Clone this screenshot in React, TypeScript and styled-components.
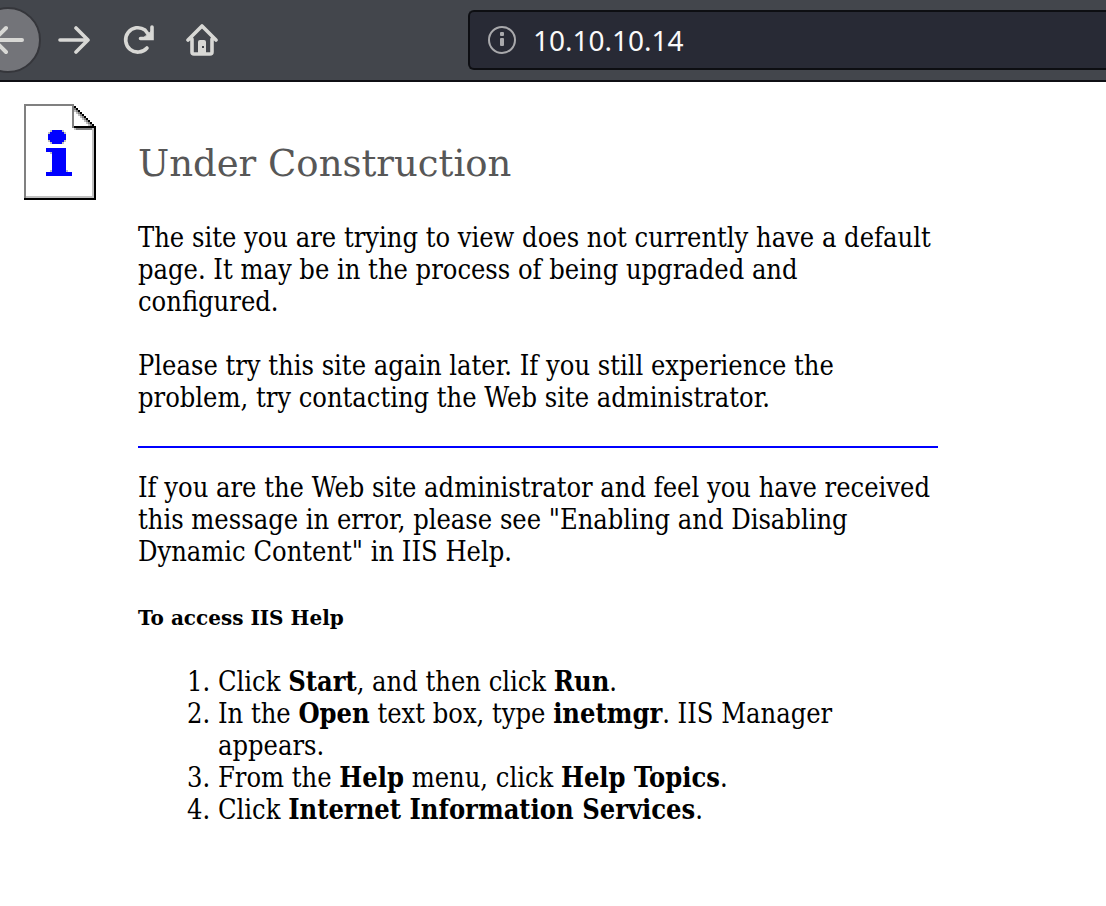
import React from 'react';
import styled, { createGlobalStyle } from 'styled-components';

const GlobalStyle = createGlobalStyle`
  * { box-sizing: border-box; }
  body {
    margin: 0;
    background: #fff;
    color: #000;
    font-family: "DejaVu Serif", serif;
  }
`;

const Toolbar = styled.header`
  display: flex;
  height: 82px;
  align-items: center;
  overflow: hidden;
  background: #43464c;
  border-bottom: 2px solid #0f0f14;
`;

const NavButton = styled.button<{ $round?: boolean }>`
  display: flex;
  flex: none;
  align-items: center;
  justify-content: center;
  width: ${p => (p.$round ? 66 : 64)}px;
  height: ${p => (p.$round ? 66 : 64)}px;
  margin-right: ${p => (p.$round ? 1 : 0)}px;
  padding: 0;
  border: ${p => (p.$round ? '2px solid #35363b' : 'none')};
  border-radius: ${p => (p.$round ? '50%' : '4px')};
  background: ${p => (p.$round ? '#737479' : 'transparent')};
  color: #d8d8d5;
`;

const NavGroup = styled.nav`
  display: flex;
  flex: none;
  align-items: center;
  margin-left: -25px;
`;

const AddressBar = styled.label`
  display: flex;
  flex: 1;
  align-items: center;
  gap: 17px;
  height: 60px;
  margin-left: 234px;
  padding-left: 18px;
  border: 2px solid #0d0e12;
  border-right: none;
  border-radius: 6px 0 0 6px;
  background: #282a35;
  color: #a9a9ac;
`;

const AddressInput = styled.input`
  flex: 1;
  min-width: 0;
  padding: 0;
  border: none;
  outline: none;
  background: transparent;
  color: #f9f9fa;
  font: 28px/40px "Noto Sans", sans-serif;
`;

const Page = styled.main`
  display: flex;
  align-items: flex-start;
  gap: 42px;
  padding: 22px 24px;
`;

const Article = styled.article`
  flex: 0 1 800px;
  min-width: 0;
  padding-top: 36px;
  font: 27px/32px "DejaVu Serif Condensed", "DejaVu Serif", serif;
  font-stretch: condensed;
`;

const Title = styled.h1`
  margin: 0 0 34px;
  color: #575757;
  font: 400 37px/48px "DejaVu Serif", serif;
`;

const Paragraph = styled.p`
  margin: 0 0 32px;
`;

const Divider = styled.hr`
  height: 2px;
  margin: 0 0 24px;
  border: none;
  background: #00f;
`;

const Subtitle = styled.h2`
  margin: 36px 0 0;
  font: 700 20px/28px "DejaVu Serif", serif;
`;

const Steps = styled.ol`
  margin: 34px 0 0;
  padding-left: 80px;
`;

const DocumentSvg = styled.svg`
  flex: none;
`;

const iconStroke = { fill: 'none', stroke: 'currentColor', strokeWidth: 4, strokeLinecap: 'round', strokeLinejoin: 'round' } as const;

const BackIcon = () => (
  <svg width="32" height="32" viewBox="0 0 32 32" {...iconStroke}>
    <path d="M30 16H3M14 4 2 16l12 12" />
  </svg>
);

const ForwardIcon = () => (
  <svg width="32" height="32" viewBox="0 0 32 32" {...iconStroke}>
    <path d="M2 16h27M18 4l12 12-12 12" strokeWidth="3.6" />
  </svg>
);

const ReloadIcon = () => (
  <svg width="32" height="32" viewBox="0 0 32 32" {...iconStroke}>
    <path d="M25 24A12.200 12.200 0 1 1 23 6L26 10" strokeWidth="3.6" />
    <path d="M30 3V14.500H18.500" strokeWidth="3.6" strokeLinejoin="miter" />
    <path d="M30 7V14.500H21Z" fill="currentColor" strokeWidth="1" />
  </svg>
);

const HomeIcon = () => (
  <svg width="32" height="32" viewBox="0 0 32 32" {...iconStroke}>
    <path d="M2 16 16 2l14 14M6 15v13q0 2 2 2h16q2 0 2-2V15" strokeWidth="3.6" />
    <path d="M12 30V18q0-2 2-2h4q2 0 2 2v12Z" fill="currentColor" stroke="none" />
    <rect x="16" y="22" width="2" height="2" fill="#43464c" stroke="none" />
  </svg>
);

const InfoIcon = () => (
  <svg width="28" height="28" viewBox="0 0 28 28" fill="currentColor">
    <circle cx="14" cy="14" r="13" fill="none" stroke="currentColor" strokeWidth="2" />
    <rect x="12" y="6" width="4" height="4" rx="1" />
    <rect x="12" y="12" width="4" height="8" rx="1" />
  </svg>
);

const foldSteps = Array.from({ length: 10 }, (_, i) => i);

const DocumentIcon = () => (
  <DocumentSvg width="72" height="96" viewBox="0 0 36 48" shapeRendering="crispEdges" role="img" aria-label="Information">
    <path fill="#c0c0c0" d="M1 46h34v1H1zM34 12h1v35h-1zM25 12h10v1H25z" />
    <path fill="#808080" d="M0 0h25v1H0zM0 0h1v47H0zM24 0h1v12h-1zM26 12h8v1h-8z" />
    {foldSteps.map(i => (
      <React.Fragment key={i}>
        <rect x={25 + i} y={1 + i} width="1" height="1" />
        {i < 9 && <rect x={25 + i} y={2 + i} width="1" height="1" fill="#808080" />}
        {i < 8 && <rect x={25 + i} y={3 + i} width="1" height="1" fill="#c0c0c0" />}
      </React.Fragment>
    ))}
    <path d="M0 47h36v1H0zM35 11h1v37h-1zM25 11h11v1H25z" />
    <path fill="#00f" d="M14 13h5v1h1v1h1v3h-1v1h-1v1h-5v-1h-1v-1h-1v-3h1v-1h1zM11 22h10v12h3v2H11v-2h3V24h-3z" />
    <path fill="#00f" d="M13 14h7v5h-7zM12 15h9v3h-9z" />
    <path fill="#c0c0c0" d="M13 13h1v1h-1zM19 13h1v1h-1zM12 14h1v1h-1zM20 14h1v1h-1zM12 18h1v1h-1zM20 18h1v1h-1zM13 19h1v1h-1zM19 19h1v1h-1zM13 24h1v1h-1zM13 33h1v1h-1zM21 33h1v1h-1z" />
  </DocumentSvg>
);

export default function App() {
  return (
    <>
      <GlobalStyle />
      <Toolbar>
        <NavGroup aria-label="Browser navigation">
          <NavButton $round aria-label="Back"><BackIcon /></NavButton>
          <NavButton aria-label="Forward"><ForwardIcon /></NavButton>
          <NavButton aria-label="Reload"><ReloadIcon /></NavButton>
          <NavButton aria-label="Home"><HomeIcon /></NavButton>
        </NavGroup>
        <AddressBar>
          <InfoIcon />
          <AddressInput type="text" aria-label="Address" defaultValue="10.10.10.14" />
        </AddressBar>
      </Toolbar>
      <Page>
        <DocumentIcon />
        <Article>
          <Title>Under Construction</Title>
          <Paragraph>
            The site you are trying to view does not currently have a default page. It may be in the
            process of being upgraded and configured.
          </Paragraph>
          <Paragraph>
            Please try this site again later. If you still experience the problem, try contacting the
            Web site administrator.
          </Paragraph>
          <Divider />
          <div>
            If you are the Web site administrator and feel you have received this message in error,
            please see "Enabling and Disabling Dynamic Content" in IIS Help.
          </div>
          <Subtitle>To access IIS Help</Subtitle>
          <Steps>
            <li>Click <b>Start</b>, and then click <b>Run</b>.</li>
            <li>In the <b>Open</b> text box, type <b>inetmgr</b>. IIS Manager appears.</li>
            <li>From the <b>Help</b> menu, click <b>Help Topics</b>.</li>
            <li>Click <b>Internet Information Services</b>.</li>
          </Steps>
        </Article>
      </Page>
    </>
  );
}
